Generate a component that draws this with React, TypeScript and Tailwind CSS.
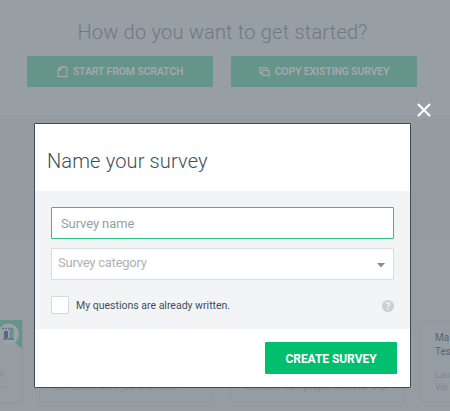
import type { ReactNode } from "react";

function ScratchIcon() {
  return (
    <svg width="11" height="12" viewBox="0 0 11 12" fill="none" stroke="currentColor" strokeWidth="1.3">
      <path d="M3.6 1h6.2v9.6H1V3.8z" strokeLinejoin="round" />
      <path d="M3.8 1v3H1" />
    </svg>
  );
}

function CopyIcon() {
  return (
    <svg width="11" height="12" viewBox="0 0 11 12" fill="none" stroke="currentColor" strokeWidth="1.3">
      <path d="M3.4 7H.8V1.8h6.800v2.400" />
      <rect x="3.4" y="4.4" width="6.8" height="5" />
    </svg>
  );
}

function StartButton({ icon, children }: { icon: ReactNode; children: ReactNode }) {
  return (
    <button className="flex h-[31px] w-[186px] items-center justify-center gap-[5px] rounded-[1px] bg-[#659488] pt-px text-[10.5px] font-bold tracking-[-0.17px] text-[#a2a6ae]">
      {icon}
      <span className="whitespace-nowrap">{children}</span>
    </button>
  );
}

function TemplateCards() {
  return (
    <div className="flex h-[83px] w-full gap-4 text-[9px] text-[#7f888f]">
      <div className="relative w-[23px] shrink-0 border-r border-b border-[#8f979d]">
        <svg width="22" height="29" viewBox="0 0 22 29" className="absolute top-0 right-0">
          <path d="M0 0h22v29L0 7z" fill="#659488" />
          <circle cx="8.5" cy="14" r="10.5" fill="#9aa1a7" />
          <path d="M2 8.5h12" stroke="#6a737c" strokeWidth="1.5" strokeDasharray="2 1" />
          <path d="M3 19h11" stroke="#666f78" strokeWidth="1.5" />
          <path d="M4 11h4v7H4z" fill="#5d668a" />
          <path d="M9.5 9h4v9h-4z" fill="#659488" />
        </svg>
        <p className="absolute top-[46px] left-0 text-[10px] text-[#7f9690]">k</p>
        <p className="absolute top-[58px] left-0">...</p>
      </div>
      <div className="flex w-[175px] shrink-0 items-end border border-[#90989e] px-3 pb-[8px]">
        <p className="whitespace-nowrap tracking-[0.4px]">feel about their job and more.</p>
      </div>
      <div className="flex w-[175px] shrink-0 items-end border border-[#90989e] px-3 pb-[8px]">
        <p className="whitespace-nowrap">feedback from people wherever it is.</p>
      </div>
      <div className="grow border-y border-l border-[#90989e] pt-[10px] pl-[13px]">
        <p className="text-[10px] leading-[14px] text-[#59646d]">
          Ma
          <br />
          Tes
        </p>
        <p className="mt-[10px] leading-[12px]">
          Lau
          <br />
          Ver
        </p>
      </div>
    </div>
  );
}

function NameSurveyModal() {
  return (
    <div className="flex h-[265px] w-[377px] flex-col rounded-[1px] border border-[#404b56] bg-white">
      <header className="flex h-[67px] items-center px-[12px] pt-[7px]">
        <h2 className="text-[20px] font-light tracking-[0.15px] whitespace-nowrap text-[#404e5a]">Name your survey</h2>
      </header>
      <div className="flex h-[138px] flex-col bg-[#f3f4f6] px-4 pt-4">
        <input
          type="text"
          placeholder="Survey name"
          className="h-8 w-full shrink-0 rounded-[1px] border border-[#2dbf83] bg-white px-[9px] text-[13px] tracking-[-0.1px] outline-none placeholder:text-[#959fa3]"
        />
        <div className="mt-[9px] flex h-8 shrink-0 items-center justify-between rounded-[1px] border border-[#dadde0] bg-white pr-[8px] pl-[6px]">
          <span className="pb-[3px] text-[13px] tracking-[-0.23px] text-[#afb3b1]">Survey category</span>
          <svg width="8" height="5" viewBox="0 0 8 5" className="mt-[3px]">
            <path d="M0 0h8L4 4.5z" fill="#858b8f" />
          </svg>
        </div>
        <div className="mt-4 flex items-center">
          <span className="h-[18px] w-[18px] rounded-[1px] border border-[#d3d8db] bg-white" />
          <span className="ml-[7px] pt-[2px] text-[10.5px] whitespace-nowrap text-[#404e5a]">My questions are already written.</span>
          <span className="mt-[2px] ml-auto flex h-3 w-3 items-center justify-center rounded-full bg-[#cbcfd2] text-[10px] font-bold text-[#f3f4f6]">
            ?
          </span>
        </div>
      </div>
      <footer className="flex justify-end pt-[13px] pr-[13px]">
        <button className="h-8 w-[132px] rounded-[1px] bg-[#00bf6f] pt-px text-[12px] font-bold tracking-[-0.05px] text-white">CREATE SURVEY</button>
      </footer>
    </div>
  );
}

export default function App() {
  return (
    <div className="relative h-[411px] w-[450px] overflow-hidden bg-[#979ea4] font-['Roboto',sans-serif]">
      <main className="flex h-full flex-col">
        <section className="h-[120px] shrink-0 border-b border-[#929a9f]">
          <h1 className="pt-[17px] text-center text-[20px] leading-[30px] font-light tracking-[0.21px] whitespace-nowrap text-[#6d7a84]">
            <span className="pr-[5px]">How do you want to get started?</span>
          </h1>
          <div className="mt-[9px] flex gap-[18px] pl-[27px]">
            <StartButton icon={<ScratchIcon />}>START FROM SCRATCH</StartButton>
            <StartButton icon={<CopyIcon />}>COPY EXISTING SURVEY</StartButton>
          </div>
        </section>
        <section className="h-[117px] shrink-0 bg-[#949ca1]" />
        <section className="grow border-t border-[#9199a0] bg-[#959da3] pt-[82px]">
          <TemplateCards />
        </section>
      </main>
      <div className="absolute top-[123px] left-[34px]">
        <NameSurveyModal />
      </div>
      <button aria-label="Close" className="absolute top-[103px] left-[417px] text-white">
        <svg width="14" height="14" viewBox="0 0 14 14" stroke="currentColor" strokeWidth="2.2">
          <path d="M1 1l12 12M13 1L1 13" />
        </svg>
      </button>
    </div>
  );
}
